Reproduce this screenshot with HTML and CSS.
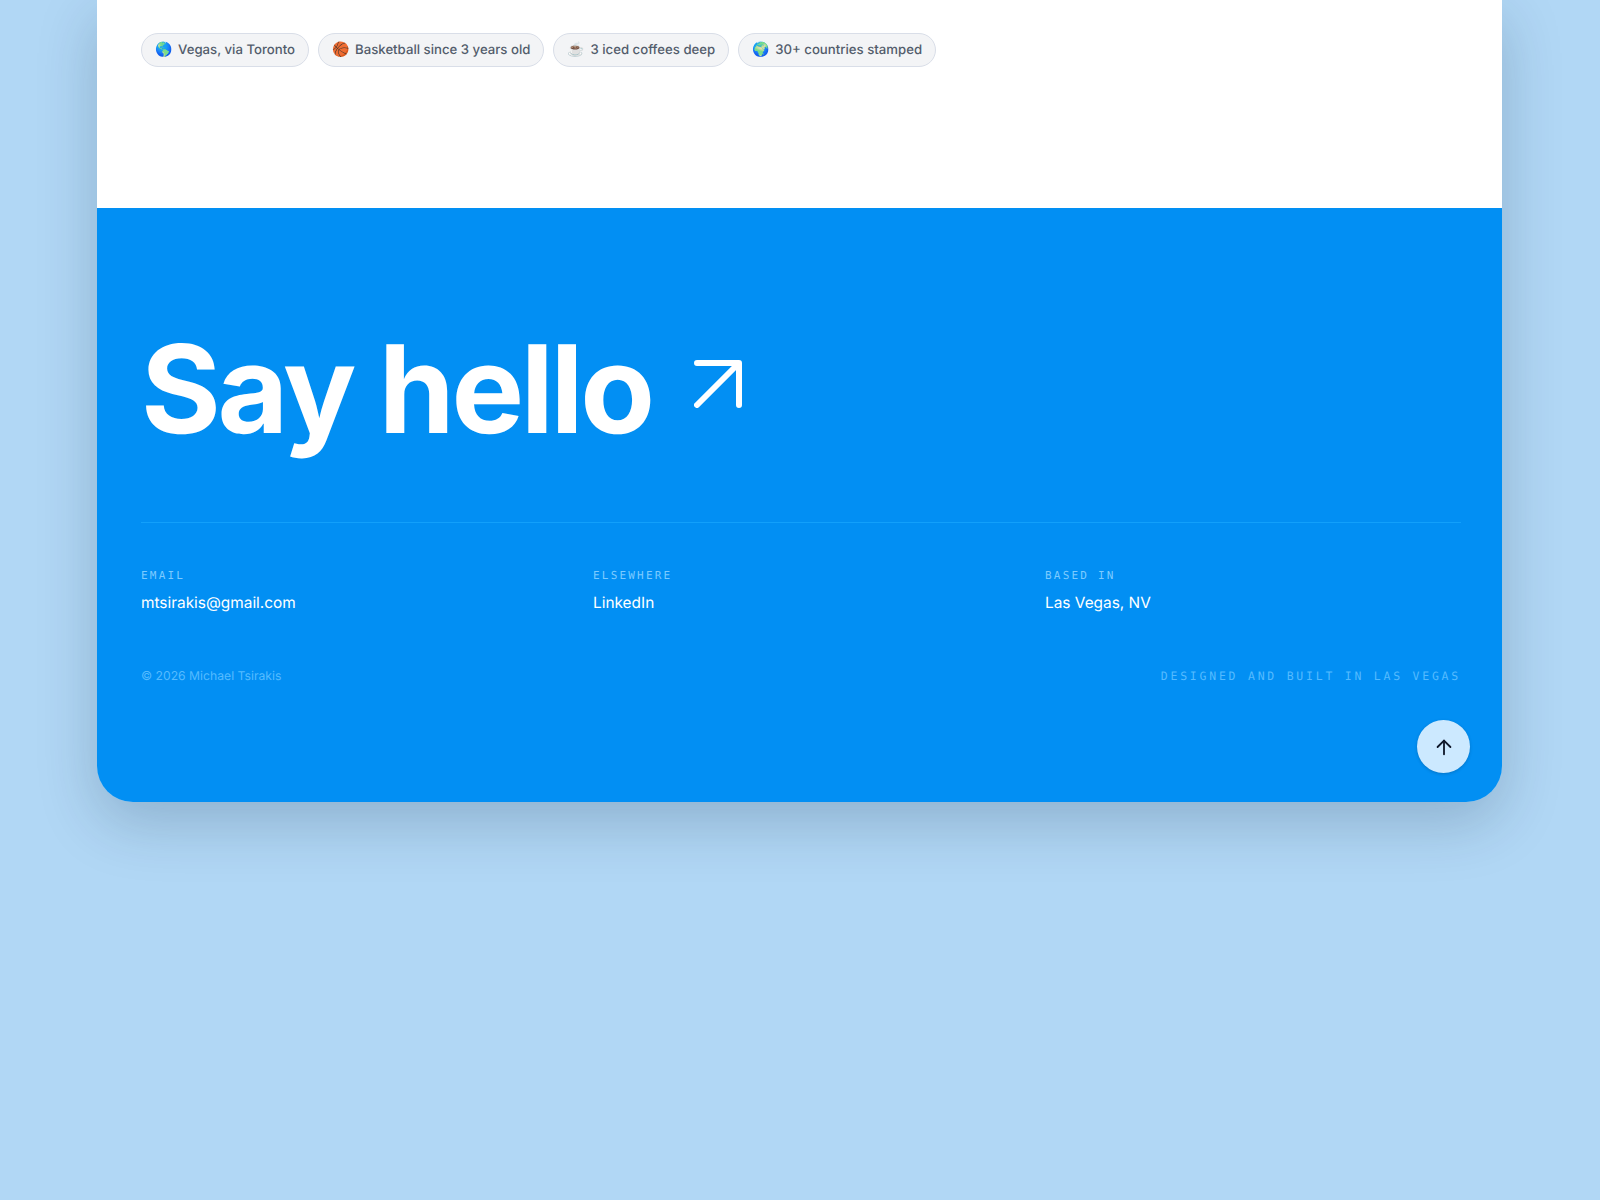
FILE: index.html
```html
<!DOCTYPE html>
<html lang="en">
<head>
    <meta charset="UTF-8">
    <meta name="viewport" content="width=device-width, initial-scale=1.0">
    <title>Michael Tsirakis</title>
    <link rel="stylesheet" href="styles.css">
</head>
<body>
    <main class="card">
        <section class="about">
            <ul class="chips">
                <li class="chip"><span class="chip-icon">🌎</span>Vegas, via Toronto</li>
                <li class="chip"><span class="chip-icon">🏀</span>Basketball since 3 years old</li>
                <li class="chip"><span class="chip-icon">☕</span>3 iced coffees deep</li>
                <li class="chip"><span class="chip-icon">🌍</span>30+ countries stamped</li>
            </ul>
        </section>

        <footer class="footer">
            <a class="hello" href="#">
                <span>Say hello</span>
                <svg class="hello-arrow" viewBox="0 0 48 48" fill="none" stroke="currentColor" stroke-width="6" stroke-linecap="round" stroke-linejoin="round">
                    <path d="M3 3H45V45"/>
                    <path d="M44 4L3 45"/>
                </svg>
            </a>

            <div class="contact">
                <div>
                    <p class="label">Email</p>
                    <p class="value">mtsirakis@gmail.com</p>
                </div>
                <div>
                    <p class="label">Elsewhere</p>
                    <p class="value">LinkedIn</p>
                </div>
                <div>
                    <p class="label">Based in</p>
                    <p class="value">Las Vegas, NV</p>
                </div>
            </div>

            <div class="legal">
                <span>© 2026 Michael Tsirakis</span>
                <span class="legal-right">Designed and built in Las Vegas</span>
            </div>

            <button class="to-top" aria-label="Back to top">
                <svg viewBox="0 0 24 24" fill="none" stroke="currentColor" stroke-width="2" stroke-linecap="round" stroke-linejoin="round">
                    <path d="M12 20V5"/>
                    <path d="M5 12l7-7 7 7"/>
                </svg>
            </button>
        </footer>
    </main>
</body>
</html>
```

FILE: styles.css
```css
body {
    margin: 0;
    min-height: 1200px;
    font-family: 'Inter', sans-serif;
    text-rendering: geometricPrecision;
    background-color: #b1d7f5;
}
.card {
    width: 1405px;
    margin-left: 97px;
    border-radius: 0 0 36px 36px;
    box-shadow: 0 20px 60px rgba(15, 40, 70, 0.22);
}
.about {
    height: 207.500px;
    box-sizing: border-box;
    padding-top: 33px;
    padding-left: 44px;
    background-color: white;
}
.chips {
    display: flex;
    gap: 9px;
    margin: 0;
    padding: 0;
    list-style: none;
}
.chip {
    display: flex;
    align-items: center;
    gap: 7px;
    height: 34px;
    box-sizing: border-box;
    padding: 0 13px;
    border: 1.5px solid #d9dee8;
    border-radius: 17px;
    background-color: #f3f4f6;
    color: #525c6b;
    font-size: 13.2px;
    font-weight: 450;
}
.chip-icon {
    font-size: 14px;
    width: 16px;
    margin-top: -2px;
    text-align: center;
}
.footer {
    position: relative;
    height: 594.500px;
    box-sizing: border-box;
    padding: 120.500px 41px 0 44px;
    background-color: #028ff3;
    border-radius: 0 0 36px 36px;
    color: white;
}
.hello {
    display: flex;
    align-items: center;
    gap: 42px;
    height: 195px;
    box-sizing: border-box;
    padding-bottom: 70px;
    border-bottom: 1px solid #12a0fb;
    color: white;
    text-decoration: none;
    font-size: 122px;
    font-weight: 700;
    letter-spacing: -0.027em;
    line-height: 1;
}
.hello-arrow {
    width: 48px;
    height: 48px;
    flex: none;
    margin-bottom: 12px;
}
.contact {
    display: grid;
    grid-template-columns: repeat(3, 1fr);
    gap: 36px;
    padding-top: 46px;
}
.label {
    margin: 0 0 9px;
    color: #7dcbff;
    font-family: 'DejaVu Sans Mono', monospace;
    font-size: 11px;
    letter-spacing: 0.2em;
    text-transform: uppercase;
}
.value {
    margin: 0;
    font-size: 15.4px;
    line-height: 24px;
}
.legal {
    display: flex;
    justify-content: space-between;
    align-items: center;
    margin-top: 53px;
    color: #55bbff;
    font-size: 12.2px;
}
.legal-right {
    font-family: 'DejaVu Sans Mono', monospace;
    font-size: 11.5px;
    letter-spacing: 0.24em;
    text-transform: uppercase;
}
.to-top {
    position: absolute;
    right: 32px;
    bottom: 29px;
    display: flex;
    align-items: center;
    justify-content: center;
    width: 53px;
    height: 53px;
    padding: 0;
    border: none;
    border-radius: 50%;
    background-color: #cce9ff;
    box-shadow: 0 1px 3px rgba(15, 40, 70, 0.25);
    color: #0f172a;
}
.to-top svg {
    width: 22px;
    height: 22px;
}
```
